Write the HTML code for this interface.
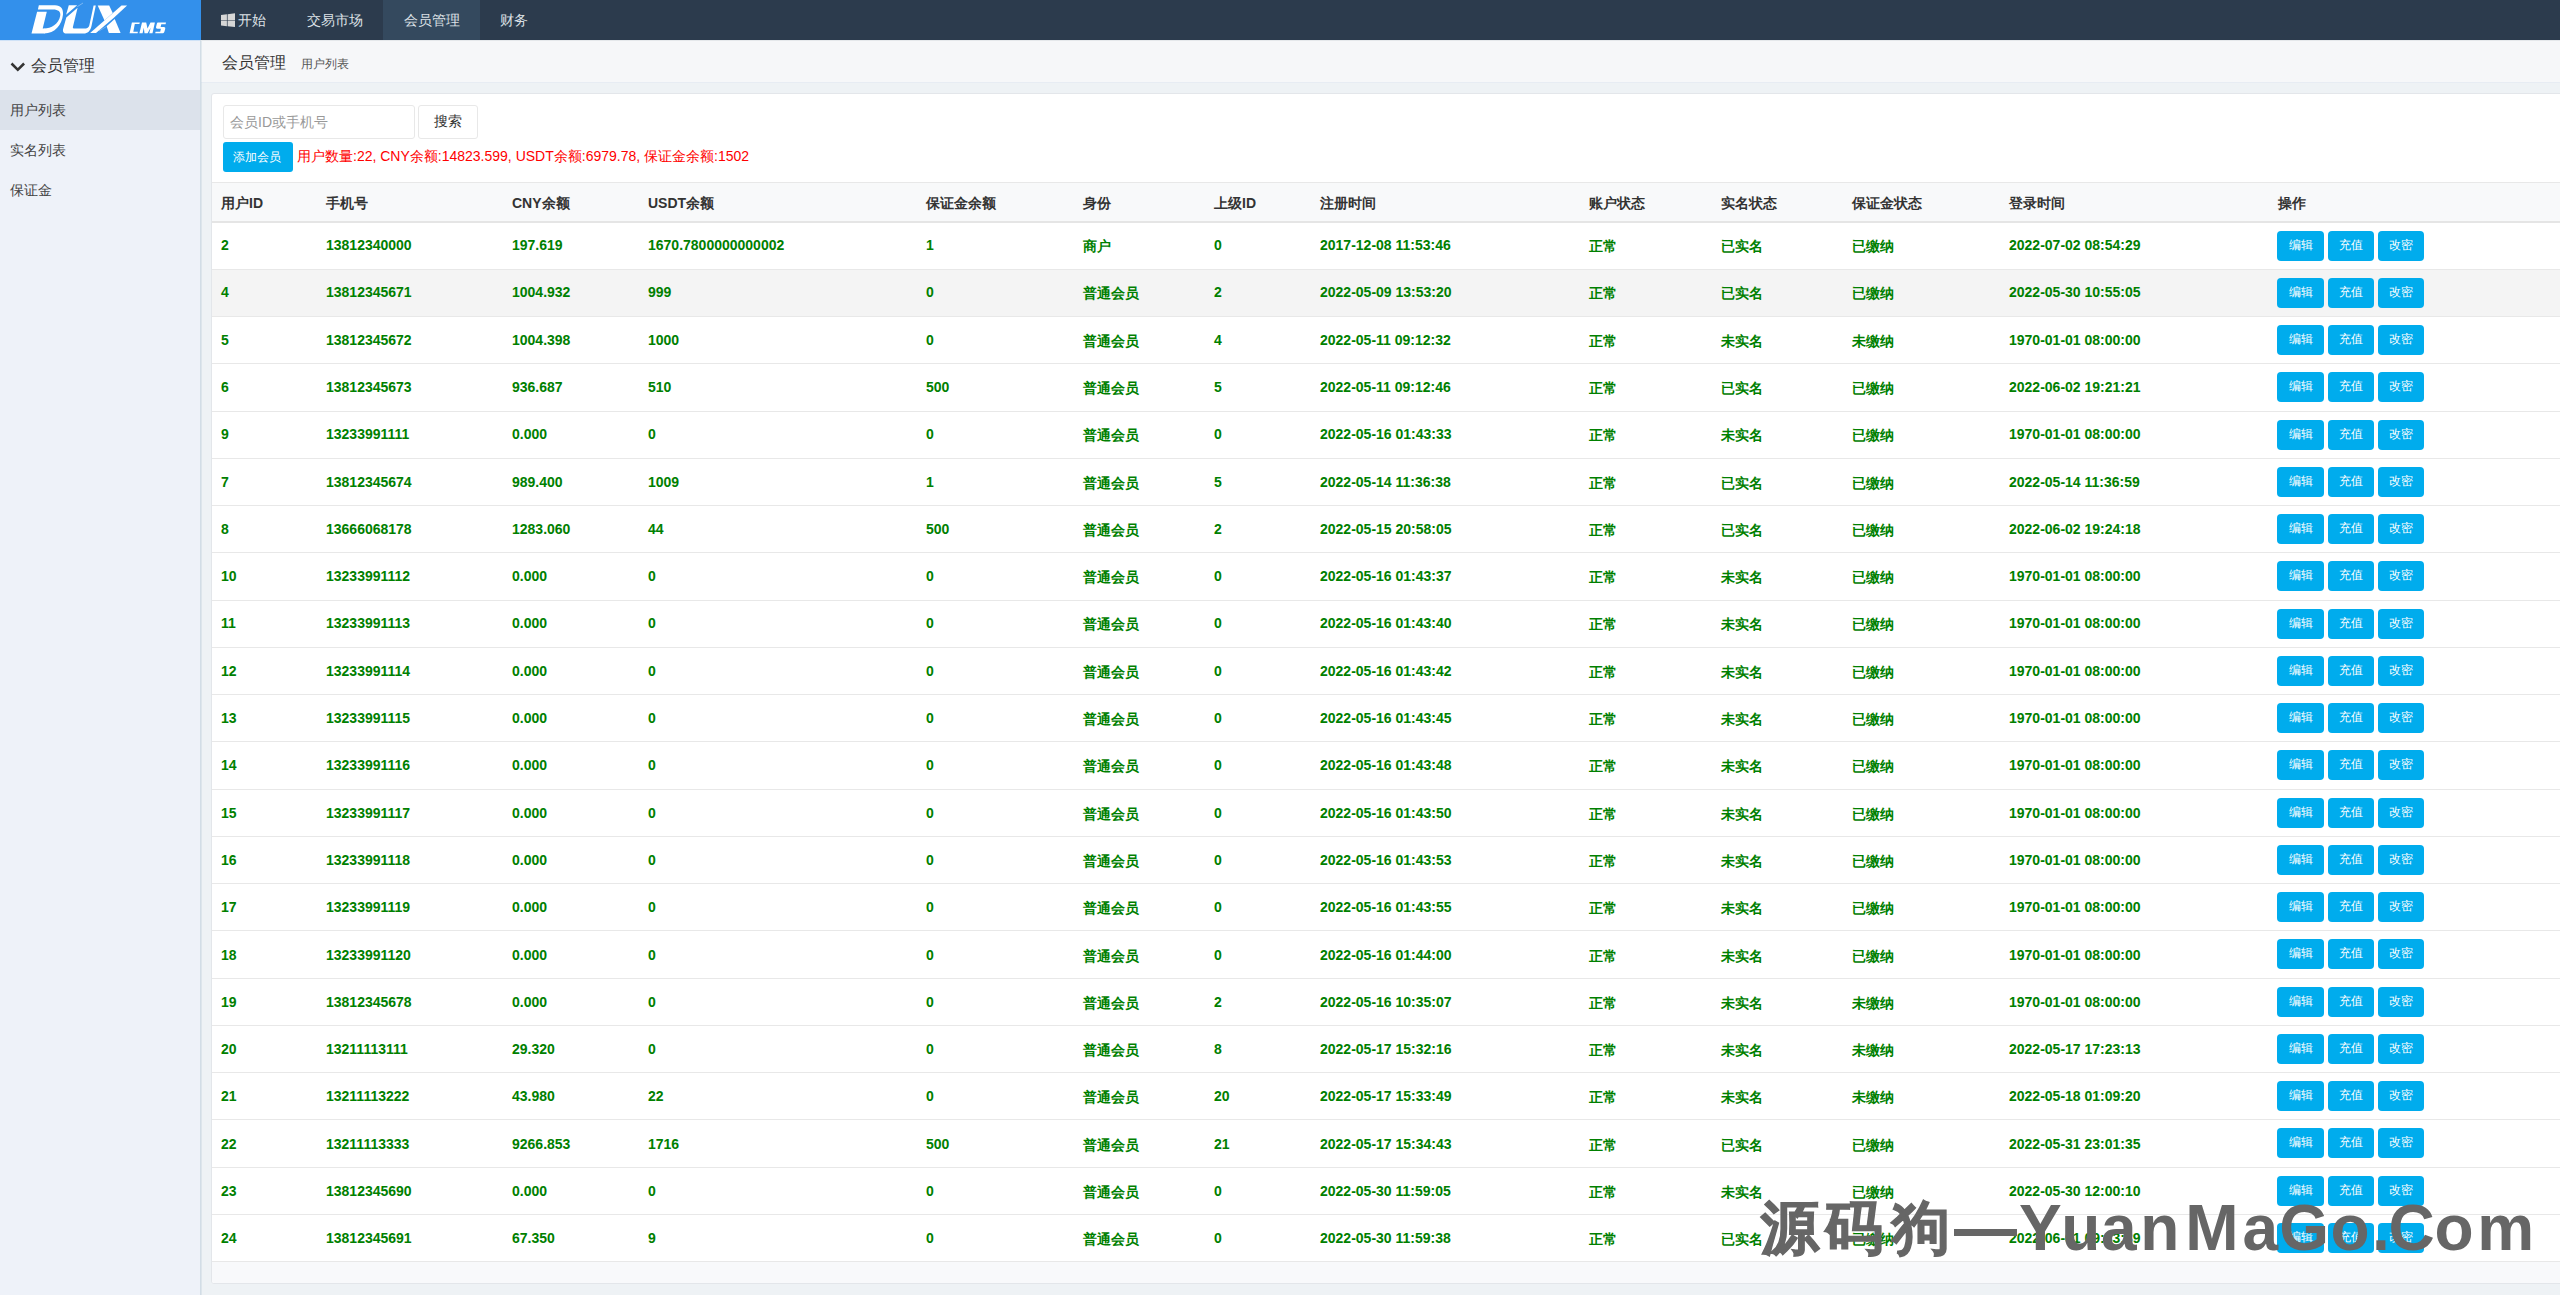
<!DOCTYPE html><html><head><meta charset="utf-8"><style>
html,body{margin:0;padding:0}
body{width:2560px;height:1295px;overflow:hidden;position:relative;font-family:"Liberation Sans",sans-serif;background:#eef2f5;color:#333}
.top{position:absolute;left:0;top:0;width:2560px;height:40px;background:#2c3b4d}
.logo{position:absolute;left:0;top:0;width:201px;height:40px;background:#3390eb}
.logo svg{position:absolute;left:0;top:0}
.ni{position:absolute;top:0;height:40px;color:#dde1e6;font-size:14px}
.ni.act{background:#34495e}
.ni span{position:absolute;top:0;line-height:40px;white-space:nowrap}
.win{position:absolute;left:20px;top:13px}
.side{position:absolute;left:0;top:40px;width:200px;height:1255px;background:#eef2f9;border-right:1px solid #d2dde6}
.stitle{position:absolute;left:0;top:0;width:200px;height:50px}
.chev{position:absolute;left:0;top:0}
.stitle span{position:absolute;left:31px;top:1px;line-height:50px;font-size:16px;color:#333}
.sitem{position:absolute;left:0;width:200px;height:40px}
.sitem.act{background:#dce2eb}
.sitem span{position:absolute;left:10px;top:0;line-height:40px;font-size:14px;color:#444}
.crumb{position:absolute;left:201px;top:40px;width:2359px;height:42px;background:#f6f7f9;border-bottom:1px solid #e7ecf3}
.crumb .ct{position:absolute;left:21px;top:1px;line-height:44px;font-size:16px;color:#333}
.crumb .cs{position:absolute;left:100px;top:2px;line-height:44px;font-size:12px;color:#555}
.card{position:absolute;left:211px;top:93px;width:2400px;height:1189px;background:#fff;border:1px solid #e3e6ea;border-radius:3px;overflow:hidden}
.inp{position:absolute;left:11px;top:11px;width:190px;height:32px;border:1px solid #e8e8e8;border-radius:3px}
.inp span{position:absolute;left:6px;top:0;line-height:32px;font-size:14px;color:#999;white-space:nowrap}
.sbtn{position:absolute;left:206px;top:11px;width:58px;height:32px;border:1px solid #e8e8e8;border-radius:3px}
.sbtn span{position:absolute;left:15px;top:-1px;line-height:32px;font-size:14px;color:#333}
.abtn{position:absolute;left:11px;top:48px;width:70px;height:30px;background:#00aced;border-radius:3px}
.abtn span{position:absolute;left:10px;top:0;line-height:30px;font-size:12px;color:#fff;white-space:nowrap}
.stat{position:absolute;left:85px;top:47px;line-height:30px;font-size:14px;color:#f00;white-space:nowrap}
.thead{position:absolute;left:0;top:88px;width:2400px;height:38px;background:#f8f9fa;border-top:1px solid #e8e8e8;border-bottom:2px solid #e5e5e5}
.thead span{position:absolute;top:1px;line-height:38px;font-size:14px;font-weight:bold;color:#333;white-space:nowrap}
.row{position:absolute;left:0;width:2400px;height:46.25px;background:#fff}
.rb{position:absolute;left:0;width:2400px;height:1px;background:#e8e8e8}
.row.hov{background:#f4f4f4}
.rt{position:absolute;left:0;width:2400px;height:46px}
.row span.cj{top:0}
.row span{position:absolute;top:-1px;line-height:46px;font-size:14px;font-weight:bold;color:#008000;white-space:nowrap}
.btn{position:absolute;top:7.5px;width:46.6px;height:30.2px;line-height:28px;text-align:center;font-size:12px;font-weight:normal;color:#fff;background:#00aced;border-radius:4px}
.foot{position:absolute;left:0;top:1168px;width:2400px;height:21px;background:#f8f9fb}
.wm{position:absolute;font-weight:bold;color:#666;white-space:nowrap;line-height:80px}
.wmd{position:absolute;left:1954px;top:1228.5px;width:63px;height:7px;background:#666}

</style></head><body>
<div class="top">
<div class="logo"><svg width="201" height="40" viewBox="0 0 201 40">
<g fill="#fff">
<path d="M38.85,5.3 L55,5.3 C60.8,5.3 63.5,9 63,14.5 C62,24.5 55,33.5 44,33.5 L44,28.5 C51,28.5 58.8,24 60.2,16 C61,11.5 58.3,9.4 53,9.4 L37.9,9.4 Z"/>
<path d="M37.1,11.7 L46.8,11.7 L42.7,28.5 L44.5,28.5 L44.5,33.5 L31.5,33.5 Z"/>
<path d="M68.8,5.3 L77.2,5.3 L66.1,14.8 Z"/>
<path d="M66.3,17.6 L77.6,7.8 L72.9,27 C72.6,28.2 73.3,28.6 74.9,28.6 L84.5,28.6 C86.5,28.6 88.6,28 89.3,25.5 L93.6,5.5 L95.8,5.5 L91.5,26 C90.5,31 87.5,33.5 83.7,33.5 L66.5,33.5 C63.5,33.5 62.5,31.5 63.1,29 Z"/>
<path d="M97.7,5.6 L109.2,5.6 L112.7,12.9 L104.5,20.5 Z"/>
<path d="M121.5,5.6 L127.1,5.6 L113.6,17.9 L96,33.1 L90.1,33.1 Z"/>
<path d="M114.7,19 L120.6,33.1 L108.9,33.1 L106.6,26.3 Z"/>
<path d="M131.9,22.6 L139.8,22.6 L139.4,24.1 L134.8,24.1 L133.3,31.8 L137.9,31.8 L137.6,33.3 L129.6,33.3 Z"/>
<path d="M142.0,22.6 L146.2,22.6 L147.5,28.5 L150.5,22.6 L154.9,22.6 L152.5,33.3 L149.3,33.3 L150.6,27.8 L147.6,33.3 L144.5,33.3 L143.8,27.8 L142.6,33.3 L139.4,33.3 Z"/>
<path d="M158.3,22.6 L166,22.6 L165.6,24.3 L161.3,24.3 L160.6,27.1 L163.8,27.1 C165,27.1 165.5,27.8 165.2,29 L164.3,32 C164,33 163.3,33.3 162.3,33.3 L155.2,33.3 L155.6,31.7 L160.2,31.7 L160.9,28.7 L157.5,28.7 C156.3,28.7 155.8,28 156.1,26.8 L156.8,24 C157.1,23 157.5,22.6 158.3,22.6 Z"/>
</g>
<path d="M77.3,6.7 L83,3" stroke="#fff" stroke-width="0.7" opacity="0.5"/>
<path d="M106,26.8 L99,31" stroke="#fff" stroke-width="0.7" opacity="0.4"/>
</svg></div>
<div class="nav">
<div class="ni" style="left:201px;width:86px"><svg class="win" width="14" height="14" viewBox="0 0 14 14"><path fill="#d6d6d6" d="M0,2.1 L5.9,1.3 L5.9,6.9 L0,6.9 Z M6.6,1.2 L14,0.2 L14,6.9 L6.6,6.9 Z M0,7.6 L5.9,7.6 L5.9,13.2 L0,12.4 Z M6.6,7.6 L14,7.6 L14,14 L6.6,13.2 Z"/></svg><span style="left:37px">开始</span></div>
<div class="ni" style="left:287px;width:96px"><span style="left:20px">交易市场</span></div>
<div class="ni act" style="left:383px;width:97px"><span style="left:21px">会员管理</span></div>
<div class="ni" style="left:480px;width:68px"><span style="left:20px">财务</span></div>
</div></div>
<div class="side">
<div class="stitle"><svg class="chev" width="30" height="50" viewBox="0 0 30 50"><path d="M10.6,24.4 L12.4,22.6 L17.8,28.0 L23.2,22.6 L25,24.4 L17.8,31.6 Z" fill="#333"/></svg><span>会员管理</span></div>
<div class="sitem act" style="top:50px"><span>用户列表</span></div>
<div class="sitem" style="top:90px"><span>实名列表</span></div>
<div class="sitem" style="top:130px"><span>保证金</span></div>
</div>
<div class="crumb"><span class="ct">会员管理</span><span class="cs">用户列表</span></div>
<div class="card">
<div class="inp"><span>会员ID或手机号</span></div><div class="sbtn"><span>搜索</span></div>
<div class="abtn"><span>添加会员</span></div><div class="stat">用户数量:22, CNY余额:14823.599, USDT余额:6979.78, 保证金余额:1502</div>
<div class="thead">
<span style="left:9px">用户ID</span>
<span style="left:114px">手机号</span>
<span style="left:300px">CNY余额</span>
<span style="left:436px">USDT余额</span>
<span style="left:714px">保证金余额</span>
<span style="left:871px">身份</span>
<span style="left:1002px">上级ID</span>
<span style="left:1108px">注册时间</span>
<span style="left:1377px">账户状态</span>
<span style="left:1509px">实名状态</span>
<span style="left:1640px">保证金状态</span>
<span style="left:1797px">登录时间</span>
<span style="left:2066px">操作</span>
</div>
<div class="row" style="top:129.00px"><div class="rt" style="top:0.00px">
<span style="left:9px">2</span>
<span style="left:114px">13812340000</span>
<span style="left:300px">197.619</span>
<span style="left:436px">1670.7800000000002</span>
<span style="left:714px">1</span>
<span class="cj" style="left:871px">商户</span>
<span style="left:1002px">0</span>
<span style="left:1108px">2017-12-08 11:53:46</span>
<span class="cj" style="left:1377px">正常</span>
<span class="cj" style="left:1509px">已实名</span>
<span class="cj" style="left:1640px">已缴纳</span>
<span style="left:1797px">2022-07-02 08:54:29</span>
</div><b class="btn" style="left:2065.3px">编辑</b><b class="btn" style="left:2115.5px">充值</b><b class="btn" style="left:2165.7px">改密</b>
</div>
<div class="rb" style="top:175px"></div>
<div class="row hov" style="top:176.25px"><div class="rt" style="top:0.05px">
<span style="left:9px">4</span>
<span style="left:114px">13812345671</span>
<span style="left:300px">1004.932</span>
<span style="left:436px">999</span>
<span style="left:714px">0</span>
<span class="cj" style="left:871px">普通会员</span>
<span style="left:1002px">2</span>
<span style="left:1108px">2022-05-09 13:53:20</span>
<span class="cj" style="left:1377px">正常</span>
<span class="cj" style="left:1509px">已实名</span>
<span class="cj" style="left:1640px">已缴纳</span>
<span style="left:1797px">2022-05-30 10:55:05</span>
</div><b class="btn" style="left:2065.3px">编辑</b><b class="btn" style="left:2115.5px">充值</b><b class="btn" style="left:2165.7px">改密</b>
</div>
<div class="rb" style="top:222px"></div>
<div class="row" style="top:223.50px"><div class="rt" style="top:0.10px">
<span style="left:9px">5</span>
<span style="left:114px">13812345672</span>
<span style="left:300px">1004.398</span>
<span style="left:436px">1000</span>
<span style="left:714px">0</span>
<span class="cj" style="left:871px">普通会员</span>
<span style="left:1002px">4</span>
<span style="left:1108px">2022-05-11 09:12:32</span>
<span class="cj" style="left:1377px">正常</span>
<span class="cj" style="left:1509px">未实名</span>
<span class="cj" style="left:1640px">未缴纳</span>
<span style="left:1797px">1970-01-01 08:00:00</span>
</div><b class="btn" style="left:2065.3px">编辑</b><b class="btn" style="left:2115.5px">充值</b><b class="btn" style="left:2165.7px">改密</b>
</div>
<div class="rb" style="top:269px"></div>
<div class="row" style="top:270.75px"><div class="rt" style="top:0.15px">
<span style="left:9px">6</span>
<span style="left:114px">13812345673</span>
<span style="left:300px">936.687</span>
<span style="left:436px">510</span>
<span style="left:714px">500</span>
<span class="cj" style="left:871px">普通会员</span>
<span style="left:1002px">5</span>
<span style="left:1108px">2022-05-11 09:12:46</span>
<span class="cj" style="left:1377px">正常</span>
<span class="cj" style="left:1509px">已实名</span>
<span class="cj" style="left:1640px">已缴纳</span>
<span style="left:1797px">2022-06-02 19:21:21</span>
</div><b class="btn" style="left:2065.3px">编辑</b><b class="btn" style="left:2115.5px">充值</b><b class="btn" style="left:2165.7px">改密</b>
</div>
<div class="rb" style="top:317px"></div>
<div class="row" style="top:318.00px"><div class="rt" style="top:0.20px">
<span style="left:9px">9</span>
<span style="left:114px">13233991111</span>
<span style="left:300px">0.000</span>
<span style="left:436px">0</span>
<span style="left:714px">0</span>
<span class="cj" style="left:871px">普通会员</span>
<span style="left:1002px">0</span>
<span style="left:1108px">2022-05-16 01:43:33</span>
<span class="cj" style="left:1377px">正常</span>
<span class="cj" style="left:1509px">未实名</span>
<span class="cj" style="left:1640px">已缴纳</span>
<span style="left:1797px">1970-01-01 08:00:00</span>
</div><b class="btn" style="left:2065.3px">编辑</b><b class="btn" style="left:2115.5px">充值</b><b class="btn" style="left:2165.7px">改密</b>
</div>
<div class="rb" style="top:364px"></div>
<div class="row" style="top:365.25px"><div class="rt" style="top:0.25px">
<span style="left:9px">7</span>
<span style="left:114px">13812345674</span>
<span style="left:300px">989.400</span>
<span style="left:436px">1009</span>
<span style="left:714px">1</span>
<span class="cj" style="left:871px">普通会员</span>
<span style="left:1002px">5</span>
<span style="left:1108px">2022-05-14 11:36:38</span>
<span class="cj" style="left:1377px">正常</span>
<span class="cj" style="left:1509px">已实名</span>
<span class="cj" style="left:1640px">已缴纳</span>
<span style="left:1797px">2022-05-14 11:36:59</span>
</div><b class="btn" style="left:2065.3px">编辑</b><b class="btn" style="left:2115.5px">充值</b><b class="btn" style="left:2165.7px">改密</b>
</div>
<div class="rb" style="top:411px"></div>
<div class="row" style="top:412.50px"><div class="rt" style="top:0.30px">
<span style="left:9px">8</span>
<span style="left:114px">13666068178</span>
<span style="left:300px">1283.060</span>
<span style="left:436px">44</span>
<span style="left:714px">500</span>
<span class="cj" style="left:871px">普通会员</span>
<span style="left:1002px">2</span>
<span style="left:1108px">2022-05-15 20:58:05</span>
<span class="cj" style="left:1377px">正常</span>
<span class="cj" style="left:1509px">已实名</span>
<span class="cj" style="left:1640px">已缴纳</span>
<span style="left:1797px">2022-06-02 19:24:18</span>
</div><b class="btn" style="left:2065.3px">编辑</b><b class="btn" style="left:2115.5px">充值</b><b class="btn" style="left:2165.7px">改密</b>
</div>
<div class="rb" style="top:458px"></div>
<div class="row" style="top:459.75px"><div class="rt" style="top:0.35px">
<span style="left:9px">10</span>
<span style="left:114px">13233991112</span>
<span style="left:300px">0.000</span>
<span style="left:436px">0</span>
<span style="left:714px">0</span>
<span class="cj" style="left:871px">普通会员</span>
<span style="left:1002px">0</span>
<span style="left:1108px">2022-05-16 01:43:37</span>
<span class="cj" style="left:1377px">正常</span>
<span class="cj" style="left:1509px">未实名</span>
<span class="cj" style="left:1640px">已缴纳</span>
<span style="left:1797px">1970-01-01 08:00:00</span>
</div><b class="btn" style="left:2065.3px">编辑</b><b class="btn" style="left:2115.5px">充值</b><b class="btn" style="left:2165.7px">改密</b>
</div>
<div class="rb" style="top:506px"></div>
<div class="row" style="top:507.00px"><div class="rt" style="top:0.40px">
<span style="left:9px">11</span>
<span style="left:114px">13233991113</span>
<span style="left:300px">0.000</span>
<span style="left:436px">0</span>
<span style="left:714px">0</span>
<span class="cj" style="left:871px">普通会员</span>
<span style="left:1002px">0</span>
<span style="left:1108px">2022-05-16 01:43:40</span>
<span class="cj" style="left:1377px">正常</span>
<span class="cj" style="left:1509px">未实名</span>
<span class="cj" style="left:1640px">已缴纳</span>
<span style="left:1797px">1970-01-01 08:00:00</span>
</div><b class="btn" style="left:2065.3px">编辑</b><b class="btn" style="left:2115.5px">充值</b><b class="btn" style="left:2165.7px">改密</b>
</div>
<div class="rb" style="top:553px"></div>
<div class="row" style="top:554.25px"><div class="rt" style="top:0.45px">
<span style="left:9px">12</span>
<span style="left:114px">13233991114</span>
<span style="left:300px">0.000</span>
<span style="left:436px">0</span>
<span style="left:714px">0</span>
<span class="cj" style="left:871px">普通会员</span>
<span style="left:1002px">0</span>
<span style="left:1108px">2022-05-16 01:43:42</span>
<span class="cj" style="left:1377px">正常</span>
<span class="cj" style="left:1509px">未实名</span>
<span class="cj" style="left:1640px">已缴纳</span>
<span style="left:1797px">1970-01-01 08:00:00</span>
</div><b class="btn" style="left:2065.3px">编辑</b><b class="btn" style="left:2115.5px">充值</b><b class="btn" style="left:2165.7px">改密</b>
</div>
<div class="rb" style="top:600px"></div>
<div class="row" style="top:601.50px"><div class="rt" style="top:0.50px">
<span style="left:9px">13</span>
<span style="left:114px">13233991115</span>
<span style="left:300px">0.000</span>
<span style="left:436px">0</span>
<span style="left:714px">0</span>
<span class="cj" style="left:871px">普通会员</span>
<span style="left:1002px">0</span>
<span style="left:1108px">2022-05-16 01:43:45</span>
<span class="cj" style="left:1377px">正常</span>
<span class="cj" style="left:1509px">未实名</span>
<span class="cj" style="left:1640px">已缴纳</span>
<span style="left:1797px">1970-01-01 08:00:00</span>
</div><b class="btn" style="left:2065.3px">编辑</b><b class="btn" style="left:2115.5px">充值</b><b class="btn" style="left:2165.7px">改密</b>
</div>
<div class="rb" style="top:647px"></div>
<div class="row" style="top:648.75px"><div class="rt" style="top:0.55px">
<span style="left:9px">14</span>
<span style="left:114px">13233991116</span>
<span style="left:300px">0.000</span>
<span style="left:436px">0</span>
<span style="left:714px">0</span>
<span class="cj" style="left:871px">普通会员</span>
<span style="left:1002px">0</span>
<span style="left:1108px">2022-05-16 01:43:48</span>
<span class="cj" style="left:1377px">正常</span>
<span class="cj" style="left:1509px">未实名</span>
<span class="cj" style="left:1640px">已缴纳</span>
<span style="left:1797px">1970-01-01 08:00:00</span>
</div><b class="btn" style="left:2065.3px">编辑</b><b class="btn" style="left:2115.5px">充值</b><b class="btn" style="left:2165.7px">改密</b>
</div>
<div class="rb" style="top:695px"></div>
<div class="row" style="top:696.00px"><div class="rt" style="top:0.60px">
<span style="left:9px">15</span>
<span style="left:114px">13233991117</span>
<span style="left:300px">0.000</span>
<span style="left:436px">0</span>
<span style="left:714px">0</span>
<span class="cj" style="left:871px">普通会员</span>
<span style="left:1002px">0</span>
<span style="left:1108px">2022-05-16 01:43:50</span>
<span class="cj" style="left:1377px">正常</span>
<span class="cj" style="left:1509px">未实名</span>
<span class="cj" style="left:1640px">已缴纳</span>
<span style="left:1797px">1970-01-01 08:00:00</span>
</div><b class="btn" style="left:2065.3px">编辑</b><b class="btn" style="left:2115.5px">充值</b><b class="btn" style="left:2165.7px">改密</b>
</div>
<div class="rb" style="top:742px"></div>
<div class="row" style="top:743.25px"><div class="rt" style="top:0.65px">
<span style="left:9px">16</span>
<span style="left:114px">13233991118</span>
<span style="left:300px">0.000</span>
<span style="left:436px">0</span>
<span style="left:714px">0</span>
<span class="cj" style="left:871px">普通会员</span>
<span style="left:1002px">0</span>
<span style="left:1108px">2022-05-16 01:43:53</span>
<span class="cj" style="left:1377px">正常</span>
<span class="cj" style="left:1509px">未实名</span>
<span class="cj" style="left:1640px">已缴纳</span>
<span style="left:1797px">1970-01-01 08:00:00</span>
</div><b class="btn" style="left:2065.3px">编辑</b><b class="btn" style="left:2115.5px">充值</b><b class="btn" style="left:2165.7px">改密</b>
</div>
<div class="rb" style="top:789px"></div>
<div class="row" style="top:790.50px"><div class="rt" style="top:0.70px">
<span style="left:9px">17</span>
<span style="left:114px">13233991119</span>
<span style="left:300px">0.000</span>
<span style="left:436px">0</span>
<span style="left:714px">0</span>
<span class="cj" style="left:871px">普通会员</span>
<span style="left:1002px">0</span>
<span style="left:1108px">2022-05-16 01:43:55</span>
<span class="cj" style="left:1377px">正常</span>
<span class="cj" style="left:1509px">未实名</span>
<span class="cj" style="left:1640px">已缴纳</span>
<span style="left:1797px">1970-01-01 08:00:00</span>
</div><b class="btn" style="left:2065.3px">编辑</b><b class="btn" style="left:2115.5px">充值</b><b class="btn" style="left:2165.7px">改密</b>
</div>
<div class="rb" style="top:836px"></div>
<div class="row" style="top:837.75px"><div class="rt" style="top:0.75px">
<span style="left:9px">18</span>
<span style="left:114px">13233991120</span>
<span style="left:300px">0.000</span>
<span style="left:436px">0</span>
<span style="left:714px">0</span>
<span class="cj" style="left:871px">普通会员</span>
<span style="left:1002px">0</span>
<span style="left:1108px">2022-05-16 01:44:00</span>
<span class="cj" style="left:1377px">正常</span>
<span class="cj" style="left:1509px">未实名</span>
<span class="cj" style="left:1640px">已缴纳</span>
<span style="left:1797px">1970-01-01 08:00:00</span>
</div><b class="btn" style="left:2065.3px">编辑</b><b class="btn" style="left:2115.5px">充值</b><b class="btn" style="left:2165.7px">改密</b>
</div>
<div class="rb" style="top:884px"></div>
<div class="row" style="top:885.00px"><div class="rt" style="top:0.80px">
<span style="left:9px">19</span>
<span style="left:114px">13812345678</span>
<span style="left:300px">0.000</span>
<span style="left:436px">0</span>
<span style="left:714px">0</span>
<span class="cj" style="left:871px">普通会员</span>
<span style="left:1002px">2</span>
<span style="left:1108px">2022-05-16 10:35:07</span>
<span class="cj" style="left:1377px">正常</span>
<span class="cj" style="left:1509px">未实名</span>
<span class="cj" style="left:1640px">未缴纳</span>
<span style="left:1797px">1970-01-01 08:00:00</span>
</div><b class="btn" style="left:2065.3px">编辑</b><b class="btn" style="left:2115.5px">充值</b><b class="btn" style="left:2165.7px">改密</b>
</div>
<div class="rb" style="top:931px"></div>
<div class="row" style="top:932.25px"><div class="rt" style="top:0.85px">
<span style="left:9px">20</span>
<span style="left:114px">13211113111</span>
<span style="left:300px">29.320</span>
<span style="left:436px">0</span>
<span style="left:714px">0</span>
<span class="cj" style="left:871px">普通会员</span>
<span style="left:1002px">8</span>
<span style="left:1108px">2022-05-17 15:32:16</span>
<span class="cj" style="left:1377px">正常</span>
<span class="cj" style="left:1509px">未实名</span>
<span class="cj" style="left:1640px">未缴纳</span>
<span style="left:1797px">2022-05-17 17:23:13</span>
</div><b class="btn" style="left:2065.3px">编辑</b><b class="btn" style="left:2115.5px">充值</b><b class="btn" style="left:2165.7px">改密</b>
</div>
<div class="rb" style="top:978px"></div>
<div class="row" style="top:979.50px"><div class="rt" style="top:0.90px">
<span style="left:9px">21</span>
<span style="left:114px">13211113222</span>
<span style="left:300px">43.980</span>
<span style="left:436px">22</span>
<span style="left:714px">0</span>
<span class="cj" style="left:871px">普通会员</span>
<span style="left:1002px">20</span>
<span style="left:1108px">2022-05-17 15:33:49</span>
<span class="cj" style="left:1377px">正常</span>
<span class="cj" style="left:1509px">未实名</span>
<span class="cj" style="left:1640px">未缴纳</span>
<span style="left:1797px">2022-05-18 01:09:20</span>
</div><b class="btn" style="left:2065.3px">编辑</b><b class="btn" style="left:2115.5px">充值</b><b class="btn" style="left:2165.7px">改密</b>
</div>
<div class="rb" style="top:1025px"></div>
<div class="row" style="top:1026.75px"><div class="rt" style="top:0.95px">
<span style="left:9px">22</span>
<span style="left:114px">13211113333</span>
<span style="left:300px">9266.853</span>
<span style="left:436px">1716</span>
<span style="left:714px">500</span>
<span class="cj" style="left:871px">普通会员</span>
<span style="left:1002px">21</span>
<span style="left:1108px">2022-05-17 15:34:43</span>
<span class="cj" style="left:1377px">正常</span>
<span class="cj" style="left:1509px">已实名</span>
<span class="cj" style="left:1640px">已缴纳</span>
<span style="left:1797px">2022-05-31 23:01:35</span>
</div><b class="btn" style="left:2065.3px">编辑</b><b class="btn" style="left:2115.5px">充值</b><b class="btn" style="left:2165.7px">改密</b>
</div>
<div class="rb" style="top:1073px"></div>
<div class="row" style="top:1074.00px"><div class="rt" style="top:1.00px">
<span style="left:9px">23</span>
<span style="left:114px">13812345690</span>
<span style="left:300px">0.000</span>
<span style="left:436px">0</span>
<span style="left:714px">0</span>
<span class="cj" style="left:871px">普通会员</span>
<span style="left:1002px">0</span>
<span style="left:1108px">2022-05-30 11:59:05</span>
<span class="cj" style="left:1377px">正常</span>
<span class="cj" style="left:1509px">未实名</span>
<span class="cj" style="left:1640px">已缴纳</span>
<span style="left:1797px">2022-05-30 12:00:10</span>
</div><b class="btn" style="left:2065.3px">编辑</b><b class="btn" style="left:2115.5px">充值</b><b class="btn" style="left:2165.7px">改密</b>
</div>
<div class="rb" style="top:1120px"></div>
<div class="row" style="top:1121.25px"><div class="rt" style="top:1.05px">
<span style="left:9px">24</span>
<span style="left:114px">13812345691</span>
<span style="left:300px">67.350</span>
<span style="left:436px">9</span>
<span style="left:714px">0</span>
<span class="cj" style="left:871px">普通会员</span>
<span style="left:1002px">0</span>
<span style="left:1108px">2022-05-30 11:59:38</span>
<span class="cj" style="left:1377px">正常</span>
<span class="cj" style="left:1509px">已实名</span>
<span class="cj" style="left:1640px">已缴纳</span>
<span style="left:1797px">2022-06-01 09:33:39</span>
</div><b class="btn" style="left:2065.3px">编辑</b><b class="btn" style="left:2115.5px">充值</b><b class="btn" style="left:2165.7px">改密</b>
</div>
<div class="rb" style="top:1167px"></div>
<div class="foot"></div>
</div>
<div style="position:absolute;left:0;top:40px;width:200px;height:1px;background:rgba(51,144,235,0.16)"></div><div style="position:absolute;left:201px;top:40px;width:2359px;height:1px;background:rgba(44,59,77,0.08)"></div>
<div style="position:absolute;left:201px;top:41px;width:1px;height:1254px;background:rgba(190,205,218,0.35)"></div>
<div class="wmd"></div>
<span class="wm" style="left:1760.5px;top:1188px;font-size:58px;-webkit-text-stroke:1.2px #666">源</span>
<span class="wm" style="left:1825.0px;top:1188px;font-size:58px;-webkit-text-stroke:1.2px #666">码</span>
<span class="wm" style="left:1892.0px;top:1188px;font-size:58px;-webkit-text-stroke:1.2px #666">狗</span>
<span class="wm" style="left:2019.0px;top:1188px;font-size:64px">Y</span>
<span class="wm" style="left:2061.3px;top:1188px;font-size:64px">u</span>
<span class="wm" style="left:2100.9px;top:1188px;font-size:64px">a</span>
<span class="wm" style="left:2140.3px;top:1188px;font-size:64px">n</span>
<span class="wm" style="left:2185.2px;top:1188px;font-size:64px">M</span>
<span class="wm" style="left:2242.5px;top:1188px;font-size:64px">a</span>
<span class="wm" style="left:2279.2px;top:1188px;font-size:64px">G</span>
<span class="wm" style="left:2330.5px;top:1188px;font-size:64px">o</span>
<span class="wm" style="left:2372.0px;top:1188px;font-size:64px">.</span>
<span class="wm" style="left:2388.5px;top:1188px;font-size:64px">C</span>
<span class="wm" style="left:2434.4px;top:1188px;font-size:64px">o</span>
<span class="wm" style="left:2477.3px;top:1188px;font-size:64px">m</span>
</body></html>
